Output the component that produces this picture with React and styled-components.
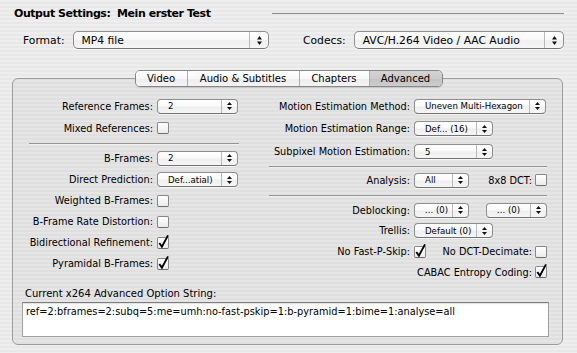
import React from "react";
import styled, { createGlobalStyle } from "styled-components";

const GlobalStyle = createGlobalStyle`
  html, body { margin: 0; padding: 0; }
  body {
    background: repeating-linear-gradient(to bottom, #eeeeee 0px, #eeeeee 2px, #e8e8e8 2px, #e8e8e8 4px);
    font-family: "DejaVu Sans", "Liberation Sans", sans-serif;
    color: #000;
  }
`;

const Page = styled.div`
  width: 577px;
  height: 353px;
  overflow: hidden;
  display: flex;
  flex-direction: column;
`;

const Header = styled.div`
  height: 27px;
  display: flex;
  align-items: center;
  padding: 0 13px 0 14px;
`;

const Title = styled.div`
  font-size: 11px;
  font-weight: bold;
  letter-spacing: -0.45px;
  white-space: pre;
`;

const TitleRule = styled.div`
  margin-left: auto;
  width: 292px;
  height: 1px;
  background: #8c8c8c;
`;

const FieldRow = styled.div`
  height: 26px;
  display: flex;
  align-items: center;
  gap: 34px;
  padding-left: 23px;
`;

const Field = styled.div`
  display: flex;
  align-items: center;
  width: ${(p) => p.$w}px;
`;

const FieldLabel = styled.span`
  font-size: 10.75px;
  margin-right: 8px;
  white-space: nowrap;
`;

const PopupBox = styled.div`
  display: flex;
  align-items: stretch;
  box-sizing: border-box;
  height: ${(p) => (p.$mini ? 15 : 18)}px;
  width: ${(p) => (p.$w ? `${p.$w}px` : "auto")};
  flex: ${(p) => (p.$w ? "0 0 auto" : "1 1 auto")};
  margin-left: ${(p) => (p.$push ? "auto" : "0")};
  border: 1px solid #8f8f8f;
  border-bottom-color: #727272;
  border-radius: ${(p) => (p.$mini ? 4 : 5)}px;
  background: linear-gradient(to bottom, #ffffff 0%, #fafafa 45%, #efefef 55%, #f6f6f6 100%);
  box-shadow: 0 1px 0 rgba(255, 255, 255, 0.7);
  overflow: hidden;
`;

const PopupText = styled.span`
  flex: 1 1 auto;
  display: flex;
  align-items: center;
  padding-left: ${(p) => (p.$mini ? 10 : 8)}px;
  font-size: ${(p) => (p.$mini ? 8.6 : 10.75)}px;
  white-space: nowrap;
  overflow: hidden;
`;

const PopupArrows = styled.span`
  flex: 0 0 auto;
  width: ${(p) => (p.$mini ? 15 : 18)}px;
  display: flex;
  align-items: center;
  justify-content: center;
  border-left: 1px solid #b9b9b9;
`;

const Arrows = ({ mini }) => (
  <svg width="5" height={mini ? 8 : 9} viewBox={mini ? "0 0 5 8" : "0 0 5 9"}>
    {mini ? (
      <>
        <polygon points="0,3 2.5,0 5,3" fill="#111" />
        <polygon points="0,5 2.5,8 5,5" fill="#111" />
      </>
    ) : (
      <>
        <polygon points="0,3.5 2.5,0 5,3.5" fill="#111" />
        <polygon points="0,5.5 2.5,9 5,5.5" fill="#111" />
      </>
    )}
  </svg>
);

const Popup = ({ value, mini, w, push }) => (
  <PopupBox $mini={mini} $w={w} $push={push}>
    <PopupText $mini={mini}>{value}</PopupText>
    <PopupArrows $mini={mini}>
      <Arrows mini={mini} />
    </PopupArrows>
  </PopupBox>
);

const CheckBox = styled.span`
  position: relative;
  display: inline-block;
  flex: 0 0 auto;
  box-sizing: border-box;
  width: 12px;
  height: 12px;
  border: 1px solid #878787;
  border-bottom-color: #6e6e6e;
  border-radius: 2px;
  background: linear-gradient(to bottom, #ffffff, #ebebeb);
`;

const CheckMark = styled.svg`
  position: absolute;
  left: -1px;
  top: -1px;
  overflow: visible;
`;

const Check = ({ on }) => (
  <CheckBox>
    {on && (
      <CheckMark width="12" height="12" viewBox="0 0 12 12">
        <path d="M2.3 6 L4.9 9.6 L11 -1.6" fill="none" stroke="#000" strokeWidth="1.9" strokeLinejoin="miter" />
      </CheckMark>
    )}
  </CheckBox>
);

const TabBar = styled.div`
  display: flex;
  justify-content: center;
  margin-top: 17px;
  margin-bottom: -9px;
  position: relative;
  z-index: 1;
`;

const TabGroup = styled.div`
  display: flex;
  height: 17px;
  box-sizing: border-box;
  border: 1px solid #878787;
  border-radius: 5px;
  overflow: hidden;
  box-shadow: 0 1px 1px rgba(0, 0, 0, 0.12);
`;

const Tab = styled.div`
  width: ${(p) => p.$w}px;
  display: flex;
  align-items: center;
  justify-content: center;
  font-size: 10px;
  white-space: nowrap;
  border-left: ${(p) => (p.$first ? "none" : "1px solid #acacac")};
  background: ${(p) =>
    p.$active
      ? "linear-gradient(to bottom, #d4d4d4 0%, #cbcbcb 50%, #c2c2c2 52%, #cdcdcd 100%)"
      : "linear-gradient(to bottom, #ffffff 0%, #f8f8f8 50%, #ededed 52%, #f4f4f4 100%)"};
`;

const Panel = styled.div`
  margin: 0 14px 0 12px;
  height: 267px;
  box-sizing: border-box;
  border: 1px solid #9d9d9d;
  border-radius: 6px;
  background: rgba(0, 0, 0, 0.035);
  padding-top: 16px;
  display: flex;
  flex-direction: column;
`;

const Columns = styled.div`
  display: grid;
  grid-template-columns: 228px 297px;
  column-gap: 9px;
  align-items: start;
`;

const Col = styled.div`
  display: flex;
  flex-direction: column;
`;

const Row = styled.div`
  display: grid;
  grid-template-columns: ${(p) => p.$label}px 1fr;
  column-gap: 4px;
  align-items: center;
  height: ${(p) => p.$h}px;
`;

const EndRow = styled.div`
  display: flex;
  justify-content: flex-end;
  align-items: center;
  height: ${(p) => p.$h}px;
`;

const Label = styled.span`
  font-size: 9.75px;
  white-space: nowrap;
  justify-self: end;
  margin-right: ${(p) => (p.$mr ? `${p.$mr}px` : "0")};
  margin-left: ${(p) => (p.$push ? "auto" : "0")};
`;

const Control = styled.div`
  display: flex;
  align-items: center;
`;

const Separator = styled.div`
  height: 1px;
  background: #959595;
  box-shadow: 0 1px 0 rgba(255, 255, 255, 0.45);
  margin: ${(p) => p.$m};
`;

const BottomArea = styled.div`
  margin-top: auto;
  padding: 0 13px 7px 9px;
`;

const OptionLabel = styled.div`
  font-size: 10px;
  line-height: 14px;
  padding-left: 3px;
  margin-bottom: 1px;
`;

const OptionBox = styled.div`
  height: 35px;
  box-sizing: border-box;
  border: 1px solid #a0a0a0;
  border-top-color: #7c7c7c;
  background: #ffffff;
  box-shadow: inset 0 1px 1px rgba(0, 0, 0, 0.12);
  padding: 2px 3px;
  font-size: 9.8px;
  line-height: 13px;
  white-space: nowrap;
`;

const tabs = [
  { name: "Video", w: 51 },
  { name: "Audio & Subtitles", w: 111 },
  { name: "Chapters", w: 69 },
  { name: "Advanced", w: 72, active: true },
];

export default function App() {
  return (
    <>
      <GlobalStyle />
      <Page>
        <Header>
          <Title>{"Output Settings:  Mein erster Test"}</Title>
          <TitleRule />
        </Header>

        <FieldRow>
          <Field $w={246}>
            <FieldLabel>Format:</FieldLabel>
            <Popup value="MP4 file" />
          </Field>
          <Field $w={261}>
            <FieldLabel>Codecs:</FieldLabel>
            <Popup value="AVC/H.264 Video / AAC Audio" />
          </Field>
        </FieldRow>

        <TabBar>
          <TabGroup>
            {tabs.map((t, i) => (
              <Tab key={t.name} $w={t.w} $first={i === 0} $active={t.active}>
                {t.name}
              </Tab>
            ))}
          </TabGroup>
        </TabBar>

        <Panel>
          <Columns>
            <Col>
              <Row $label={140} $h={22}>
                <Label>Reference Frames:</Label>
                <Control><Popup mini value="2" w={81} /></Control>
              </Row>
              <Row $label={140} $h={22}>
                <Label>Mixed References:</Label>
                <Control><Check /></Control>
              </Row>
              <Separator $m="4px 2px 3px 16px" />
              <Row $label={140} $h={22}>
                <Label>B-Frames:</Label>
                <Control><Popup mini value="2" w={81} /></Control>
              </Row>
              <Row $label={140} $h={21}>
                <Label>Direct Prediction:</Label>
                <Control><Popup mini value="Def...atial)" w={81} /></Control>
              </Row>
              <Row $label={140} $h={21}>
                <Label>Weighted B-Frames:</Label>
                <Control><Check /></Control>
              </Row>
              <Row $label={140} $h={21}>
                <Label>B-Frame Rate Distortion:</Label>
                <Control><Check /></Control>
              </Row>
              <Row $label={140} $h={21}>
                <Label>Bidirectional Refinement:</Label>
                <Control><Check on /></Control>
              </Row>
              <Row $label={140} $h={21}>
                <Label>Pyramidal B-Frames:</Label>
                <Control><Check on /></Control>
              </Row>
            </Col>

            <Col>
              <Row $label={160} $h={22}>
                <Label>Motion Estimation Method:</Label>
                <Control><Popup mini value="Uneven Multi-Hexagon" w={132} /></Control>
              </Row>
              <Row $label={160} $h={23}>
                <Label>Motion Estimation Range:</Label>
                <Control><Popup mini value="Def... (16)" w={79} /></Control>
              </Row>
              <Row $label={160} $h={23}>
                <Label>Subpixel Motion Estimation:</Label>
                <Control><Popup mini value="5" w={79} /></Control>
              </Row>
              <Separator $m="3px 0 3px 19px" />
              <Row $label={160} $h={20}>
                <Label>Analysis:</Label>
                <Control>
                  <Popup mini value="All" w={55} />
                  <Label $push $mr={3}>8x8 DCT:</Label>
                  <Check />
                </Control>
              </Row>
              <Separator $m="5px 0 4px 19px" />
              <Row $label={160} $h={20}>
                <Label>Deblocking:</Label>
                <Control>
                  <Popup mini value="... (0)" w={55} />
                  <Popup mini value="... (0)" w={61} push />
                </Control>
              </Row>
              <Row $label={160} $h={21}>
                <Label>Trellis:</Label>
                <Control><Popup mini value="Default (0)" w={79} /></Control>
              </Row>
              <Row $label={160} $h={21}>
                <Label>No Fast-P-Skip:</Label>
                <Control>
                  <Check on />
                  <Label $push $mr={3}>No DCT-Decimate:</Label>
                  <Check />
                </Control>
              </Row>
              <EndRow $h={20}>
                <Label $mr={3}>CABAC Entropy Coding:</Label>
                <Check on />
              </EndRow>
            </Col>
          </Columns>

          <BottomArea>
            <OptionLabel>Current x264 Advanced Option String:</OptionLabel>
            <OptionBox>
              ref=2:bframes=2:subq=5:me=umh:no-fast-pskip=1:b-pyramid=1:bime=1:analyse=all
            </OptionBox>
          </BottomArea>
        </Panel>
      </Page>
    </>
  );
}
